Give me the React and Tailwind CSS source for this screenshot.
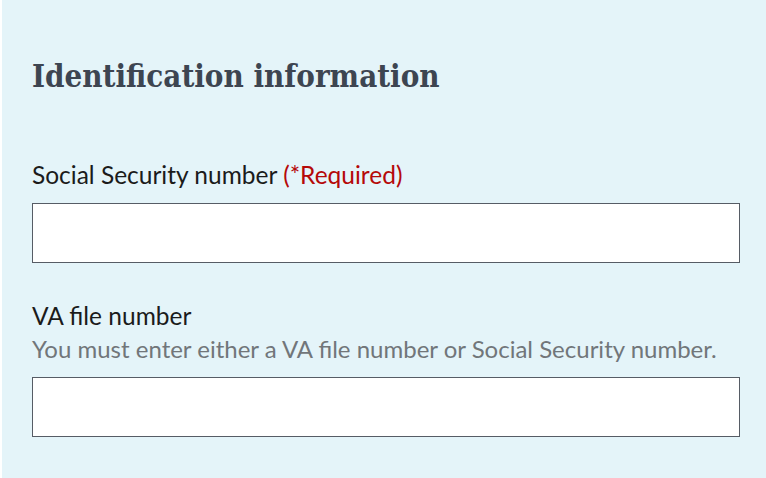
import React from 'react';

function Field({ label, required, hint, className = '' }) {
	return (
		<div className={`flex flex-col ${className}`}>
			<label className="text-[24.5px] leading-[32px] text-[#1b1b1b]">
				{label}
				{required && <span className="text-[#b50909]"> (*Required)</span>}
			</label>
			{hint && <span className="text-[24px] leading-[32px] text-[#71767a] mt-px">{hint}</span>}
			<input type="text" className="mt-[12px] h-[60px] w-full bg-white border border-[#565c65] outline-none" />
		</div>
	);
}

export default function App() {
	return (
		<div className="w-[766px] h-[478px] bg-white pl-[2px]">
			<div className="h-full bg-[#e4f4f9] pl-[30px] pr-[26px] pt-[58px]" style={{ fontFamily: 'Lato, "Liberation Sans", sans-serif' }}>
				<h2 className="text-[31px] leading-[36px] font-bold text-[#3d4551]" style={{ fontFamily: '"DejaVu Serif Condensed", "DejaVu Serif", serif' }}>
					Identification information
				</h2>
				<Field label="Social Security number" required className="mt-[65px]" />
				<Field label="VA file number" hint="You must enter either a VA file number or Social Security number." className="mt-[37px]" />
			</div>
		</div>
	);
}
